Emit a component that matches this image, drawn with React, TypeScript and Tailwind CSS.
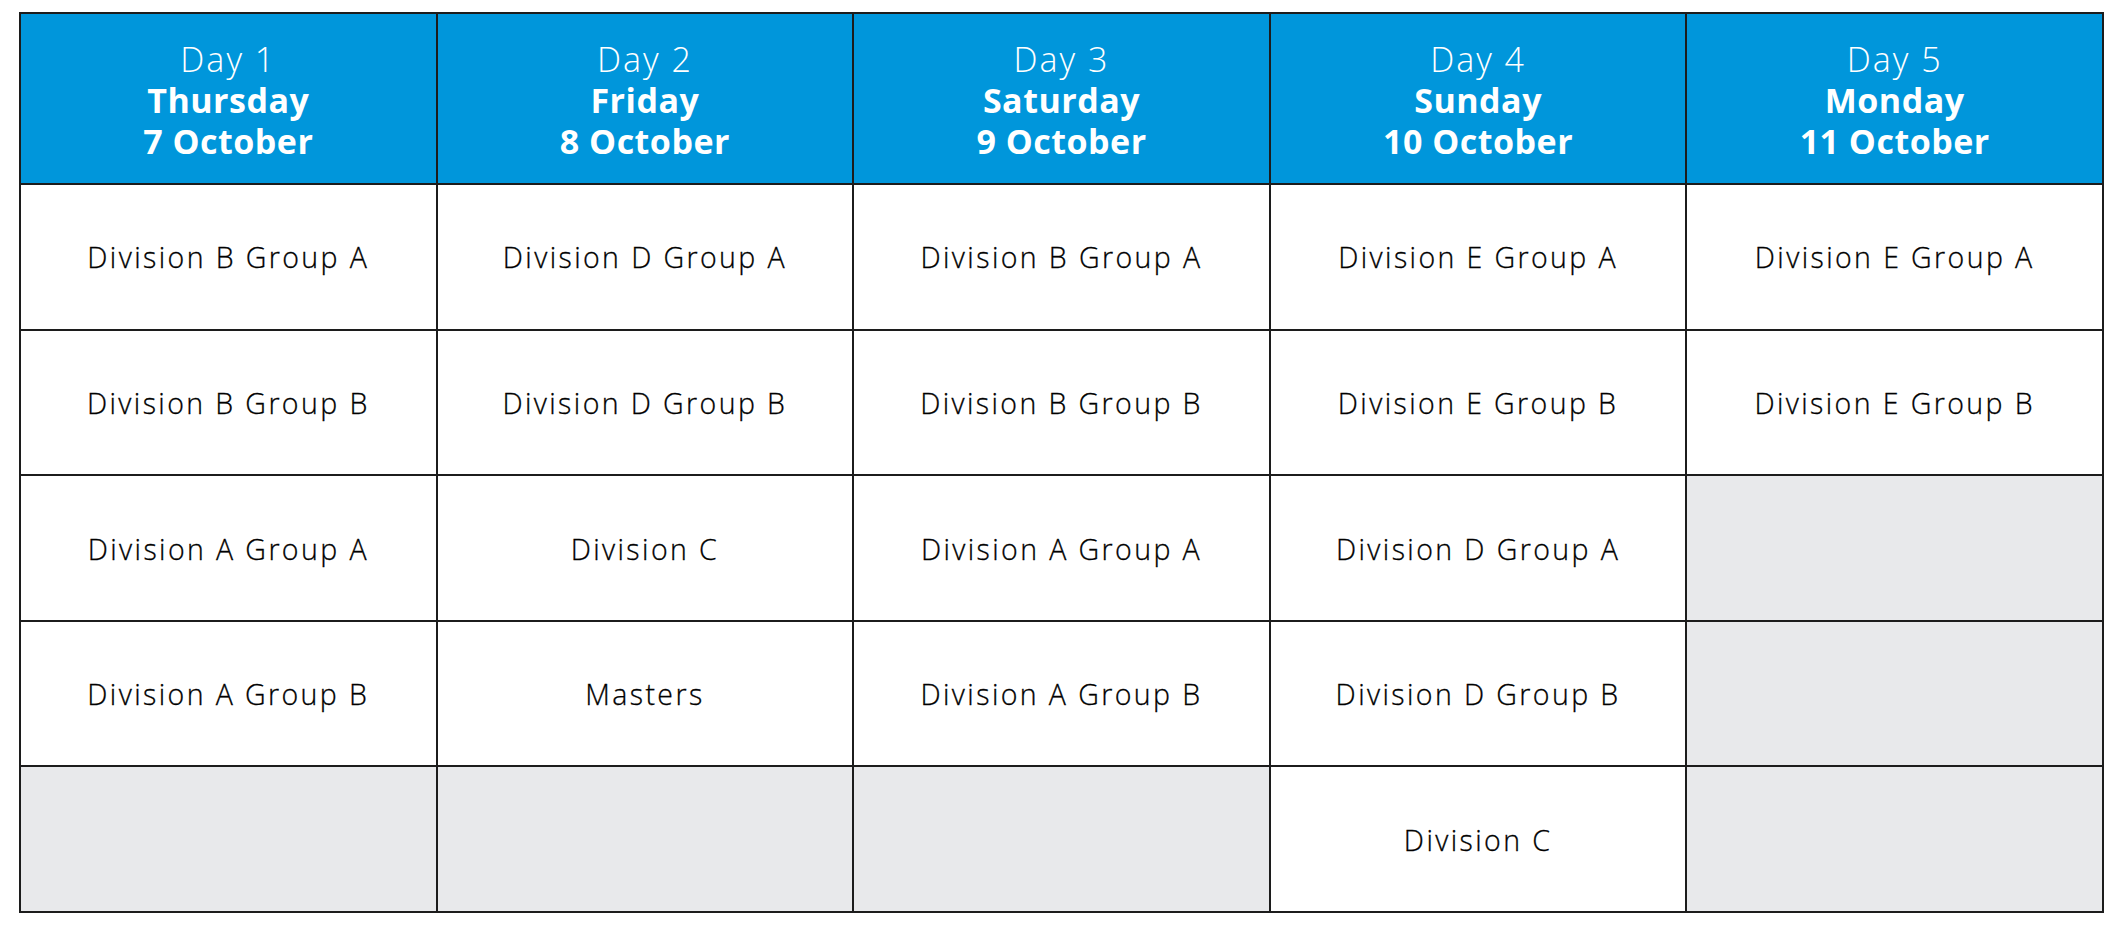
import React from "react";

const days = [
  { day: "Day 1", name: "Thursday", date: "7 October" },
  { day: "Day 2", name: "Friday", date: "8 October" },
  { day: "Day 3", name: "Saturday", date: "9 October" },
  { day: "Day 4", name: "Sunday", date: "10 October" },
  { day: "Day 5", name: "Monday", date: "11 October" },
];

const rows: (string | null)[][] = [
  ["Division B Group A", "Division D Group A", "Division B Group A", "Division E Group A", "Division E Group A"],
  ["Division B Group B", "Division D Group B", "Division B Group B", "Division E Group B", "Division E Group B"],
  ["Division A Group A", "Division C", "Division A Group A", "Division D Group A", null],
  ["Division A Group B", "Masters", "Division A Group B", "Division D Group B", null],
  [null, null, null, "Division C", null],
];

export default function App() {
  return (
    <div
      className="w-[2122px] h-[932px] bg-white pl-[19px] pt-[12px]"
      style={{ fontFamily: '"Open Sans", "Noto Sans", sans-serif' }}
    >
      <div className="w-[2085px] h-[901px] bg-[#1c1c1c] p-[2px] grid grid-cols-5 grid-rows-[169px_repeat(5,143.6px)] gap-[2px]">
        {days.map((d) => (
          <div
            key={d.day}
            className="bg-[#0096db] text-white flex flex-col items-center justify-center text-center text-[34px] leading-[41px] pt-[4px]"
          >
            <div className="font-light tracking-[2px]">{d.day}</div>
            <div className="font-bold tracking-[0.5px]">{d.name}</div>
            <div className="font-bold tracking-[0.5px]">{d.date}</div>
          </div>
        ))}
        {rows.flat().map((c, i) =>
          c ? (
            <div
              key={i}
              className="bg-white flex items-center justify-center text-[28.5px] font-light text-black tracking-[2.4px] pt-[2px]"
              style={{ WebkitTextStroke: "0.3px #000" }}
            >
              {c}
            </div>
          ) : (
            <div key={i} className="bg-[#e8e9eb]" />
          )
        )}
      </div>
    </div>
  );
}
